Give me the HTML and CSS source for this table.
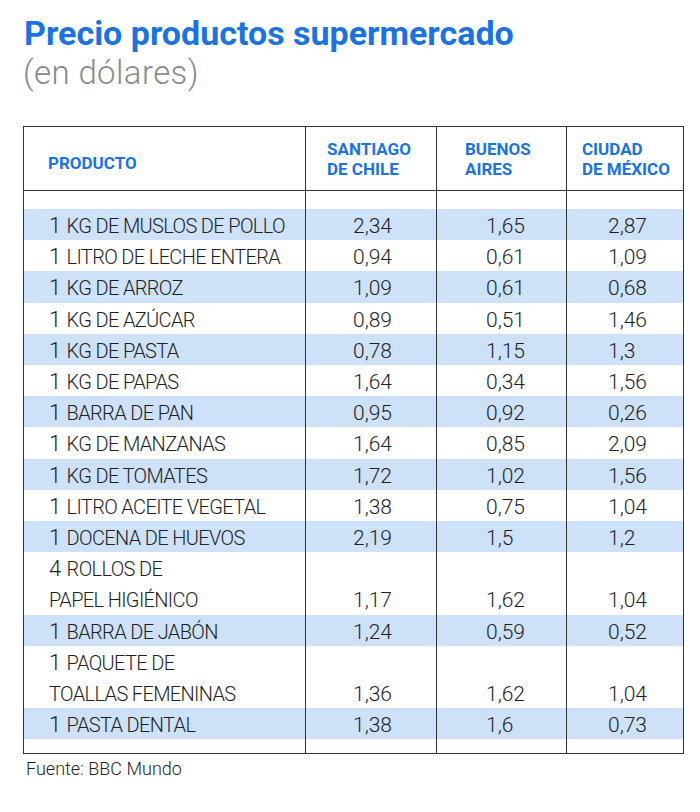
FILE: index.html
```html
<!DOCTYPE html>
<html lang="es">
<head>
<meta charset="utf-8">
<title>Precio productos supermercado</title>
<link rel="stylesheet" href="styles.css">
</head>
<body>
<div class="page">
  <h1 class="title">Precio productos supermercado</h1>
  <p class="subtitle">(en dólares)</p>
  <table class="prices">
    <colgroup>
      <col class="c-prod"><col class="c-scl"><col class="c-ba"><col class="c-mx">
    </colgroup>
    <thead>
      <tr>
        <th class="h-prod">PRODUCTO</th>
        <th class="h-scl">SANTIAGO<br>DE CHILE</th>
        <th class="h-ba">BUENOS<br>AIRES</th>
        <th class="h-mx">CIUDAD<br>DE MÉXICO</th>
      </tr>
    </thead>
    <tbody>
      <tr class="spacer top"><td></td><td></td><td></td><td></td></tr>
      <tr class="odd"><td class="prod"><span class="q">1</span> <span class="n">KG DE MUSLOS DE POLLO</span></td><td class="v1"><span class="num">2,34</span></td><td class="v2"><span class="num">1,65</span></td><td class="v3"><span class="num">2,87</span></td></tr>
      <tr><td class="prod"><span class="q">1</span> <span class="n">LITRO DE LECHE ENTERA</span></td><td class="v1"><span class="num">0,94</span></td><td class="v2"><span class="num">0,61</span></td><td class="v3"><span class="num">1,09</span></td></tr>
      <tr class="odd"><td class="prod"><span class="q">1</span> <span class="n">KG DE ARROZ</span></td><td class="v1"><span class="num">1,09</span></td><td class="v2"><span class="num">0,61</span></td><td class="v3"><span class="num">0,68</span></td></tr>
      <tr><td class="prod"><span class="q">1</span> <span class="n">KG DE AZÚCAR</span></td><td class="v1"><span class="num">0,89</span></td><td class="v2"><span class="num">0,51</span></td><td class="v3"><span class="num">1,46</span></td></tr>
      <tr class="odd"><td class="prod"><span class="q">1</span> <span class="n">KG DE PASTA</span></td><td class="v1"><span class="num">0,78</span></td><td class="v2"><span class="num">1,15</span></td><td class="v3"><span class="num">1,3</span></td></tr>
      <tr><td class="prod"><span class="q">1</span> <span class="n">KG DE PAPAS</span></td><td class="v1"><span class="num">1,64</span></td><td class="v2"><span class="num">0,34</span></td><td class="v3"><span class="num">1,56</span></td></tr>
      <tr class="odd"><td class="prod"><span class="q">1</span> <span class="n">BARRA DE PAN</span></td><td class="v1"><span class="num">0,95</span></td><td class="v2"><span class="num">0,92</span></td><td class="v3"><span class="num">0,26</span></td></tr>
      <tr><td class="prod"><span class="q">1</span> <span class="n">KG DE MANZANAS</span></td><td class="v1"><span class="num">1,64</span></td><td class="v2"><span class="num">0,85</span></td><td class="v3"><span class="num">2,09</span></td></tr>
      <tr class="odd"><td class="prod"><span class="q">1</span> <span class="n">KG DE TOMATES</span></td><td class="v1"><span class="num">1,72</span></td><td class="v2"><span class="num">1,02</span></td><td class="v3"><span class="num">1,56</span></td></tr>
      <tr><td class="prod"><span class="q">1</span> <span class="n">LITRO ACEITE VEGETAL</span></td><td class="v1"><span class="num">1,38</span></td><td class="v2"><span class="num">0,75</span></td><td class="v3"><span class="num">1,04</span></td></tr>
      <tr class="odd"><td class="prod"><span class="q">1</span> <span class="n">DOCENA DE HUEVOS</span></td><td class="v1"><span class="num">2,19</span></td><td class="v2"><span class="num">1,5</span></td><td class="v3"><span class="num">1,2</span></td></tr>
      <tr><td class="prod"><span class="q">4</span> <span class="n">ROLLOS DE</span><br><span class="n">PAPEL HIGIÉNICO</span></td><td class="v1"><span class="num">1,17</span></td><td class="v2"><span class="num">1,62</span></td><td class="v3"><span class="num">1,04</span></td></tr>
      <tr class="odd"><td class="prod"><span class="q">1</span> <span class="n">BARRA DE JABÓN</span></td><td class="v1"><span class="num">1,24</span></td><td class="v2"><span class="num">0,59</span></td><td class="v3"><span class="num">0,52</span></td></tr>
      <tr><td class="prod"><span class="q">1</span> <span class="n">PAQUETE DE</span><br><span class="n">TOALLAS FEMENINAS</span></td><td class="v1"><span class="num">1,36</span></td><td class="v2"><span class="num">1,62</span></td><td class="v3"><span class="num">1,04</span></td></tr>
      <tr class="odd"><td class="prod"><span class="q">1</span> <span class="n">PASTA DENTAL</span></td><td class="v1"><span class="num">1,38</span></td><td class="v2"><span class="num">1,6</span></td><td class="v3"><span class="num">0,73</span></td></tr>
      <tr class="spacer bottom"><td></td><td></td><td></td><td></td></tr>
    </tbody>
  </table>
  <p class="source">Fuente: BBC Mundo</p>
</div>
</body>
</html>
```
FILE: styles.css
```css
html, body {
  margin: 0;
  padding: 0;
  background: #ffffff;
}

.page {
  font-family: Roboto, "Liberation Sans", Arial, sans-serif;
  color: #1e1e1e;
  padding-top: 15px;
}

.title {
  margin: 0 0 0 24px;
  font-size: 34px;
  line-height: 36px;
  font-weight: 700;
  color: #1a73e4;
}

.subtitle {
  margin: 3px 0 0 23px;
  font-size: 33px;
  line-height: 38px;
  font-weight: 300;
  letter-spacing: 0.4px;
  color: #8a8a8a;
}

.prices {
  margin: 34px 0 0 23px;
  width: 660px;
  border-collapse: collapse;
  table-layout: fixed;
  border: 1px solid #333333;
}

.c-prod { width: 282px; }
.c-scl { width: 131px; }
.c-ba { width: 130px; }
.c-mx { width: 117px; }

.prices th,
.prices td {
  padding: 0;
  border-left: 1px solid #333333;
  border-right: 1px solid #333333;
}

.prices thead tr {
  height: 64px;
  border-bottom: 1px solid #333333;
}

.prices th {
  text-align: left;
  vertical-align: middle;
  font-size: 17px;
  line-height: 20px;
  font-weight: 700;
  color: #1a73e4;
}

.prices th.h-prod { padding-left: 24px; padding-top: 8px; }
.prices th.h-scl { padding-left: 21px; }
.prices th.h-ba { padding-left: 28px; }
.prices th.h-mx { padding-left: 15px; }

.prices td {
  font-size: 22px;
  line-height: 31.2px;
  font-weight: 300;
  vertical-align: bottom;
  white-space: nowrap;
}

.prices .spacer.top td { height: 18px; line-height: 0; }
.prices .spacer.bottom td { height: 14px; line-height: 0; }

.odd td { background: #cde2f9; }

.prices td.prod { padding-left: 25px; }

.q {
  line-height: 1;
  vertical-align: -0.5px;
}

.n {
  font-size: 20px;
  line-height: 1;
  font-weight: 300;
  letter-spacing: -0.65px;
  vertical-align: -0.5px;
}

.num {
  font-size: 21px;
  line-height: 1;
  vertical-align: -0.5px;
}

.prices td.v1 { padding-left: 47px; }
.prices td.v2 { padding-left: 49px; }
.prices td.v3 { padding-left: 41px; }

.source {
  margin: 5px 0 0 26px;
  font-size: 18px;
  line-height: 20px;
  font-weight: 300;
  color: #1e1e1e;
}
```
